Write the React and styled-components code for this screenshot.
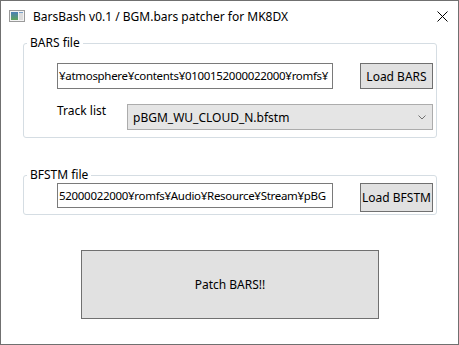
import React from 'react'
import styled, { createGlobalStyle } from 'styled-components'

const GlobalStyle = createGlobalStyle`
  html, body {
    margin: 0;
    padding: 0;
    background: #ffffff;
  }
  body {
    font-family: "Noto Sans", "Open Sans", sans-serif;
    font-size: 12px;
    color: #000;
  }
`

const Window = styled.div`
  box-sizing: border-box;
  width: 459px;
  height: 345px;
  border: 1px solid #707070;
  background: #ffffff;
  display: flex;
  flex-direction: column;
`

const TitleBar = styled.div`
  height: 30px;
  display: flex;
  align-items: center;
  padding: 0 10px 0 8px;
`

const TitleText = styled.span`
  margin-left: 8px;
  flex: 1;
  font-size: 12px;
`

const Body = styled.div`
  display: flex;
  flex-direction: column;
  padding: 4px 21px 0 22px;
`

const Group = styled.fieldset`
  margin: ${p => p.$top || 0}px 0 0 0;
  padding: ${p => p.$pad};
  border: 1px solid #d5dde3;
  border-radius: 3px;
  min-width: 0;
  display: flex;
  flex-direction: column;
  gap: ${p => p.$gap || 0}px;
`

const Legend = styled.legend`
  padding: 0 3px;
  margin-left: -30px;
  line-height: 16px;
`

const Row = styled.div`
  display: flex;
  align-items: ${p => p.$align || 'center'};
`

const TextBox = styled.div`
  box-sizing: border-box;
  width: 276px;
  height: ${p => p.$h}px;
  border: 1px solid #7a7a7a;
  overflow: hidden;
  white-space: nowrap;
  font-size: 11.5px;
  letter-spacing: -0.3px;
  line-height: ${p => p.$h - 2}px;
  padding-left: 1px;
`

const Button = styled.button`
  box-sizing: border-box;
  font: inherit;
  color: #000;
  background: #e1e1e1;
  border: 1px solid #707070;
  padding: 0;
  width: ${p => p.$w}px;
  height: ${p => p.$h}px;
  margin-left: ${p => p.$ml || 0}px;
`

const Label = styled.span`
  width: 70px;
  align-self: flex-start;
  line-height: 14px;
`

const Combo = styled.div`
  box-sizing: border-box;
  width: 306px;
  height: 26px;
  background: #e5e5e5;
  border: 1px solid #acacac;
  display: flex;
  align-items: center;
  justify-content: space-between;
  padding: 0 6px 0 5px;
`

const PatchButton = styled(Button)`
  margin: 35px 0 0 58px;
`

function AppIcon() {
  return (
    <svg width="16" height="14" viewBox="0 0 16 14">
      <defs>
        <linearGradient id="pane" x1="0" y1="0" x2="0" y2="1">
          <stop offset="0" stopColor="#4c7fb8" />
          <stop offset="1" stopColor="#5fa35a" />
        </linearGradient>
      </defs>
      <rect x="0.5" y="1.5" width="15" height="11" fill="#f4f4f4" stroke="#9a9a9a" />
      <rect x="2" y="3" width="7" height="8" fill="url(#pane)" />
      <rect x="10" y="3" width="4" height="8" fill="#dcdcdc" />
      <rect x="10" y="3" width="4" height="1" fill="#7aa0c8" />
    </svg>
  )
}

function CloseIcon() {
  return (
    <svg width="11" height="11" viewBox="0 0 11 11">
      <path d="M0.5 0.5 L10.5 10.5 M10.5 0.5 L0.5 10.5" stroke="#000" strokeWidth="1" />
    </svg>
  )
}

function Chevron() {
  return (
    <svg width="8" height="5" viewBox="0 0 8 5">
      <path d="M0.5 0.5 L4 4 L7.5 0.5" stroke="#707070" fill="none" strokeWidth="1" />
    </svg>
  )
}

export default function App() {
  return (
    <>
      <GlobalStyle />
      <Window>
        <TitleBar>
          <AppIcon />
          <TitleText>BarsBash v0.1 / BGM.bars patcher for MK8DX</TitleText>
          <CloseIcon />
        </TitleBar>
        <Body>
          <Group $pad="12px 3px 7px 33px" $gap={15}>
            <Legend>BARS file</Legend>
            <Row>
              <TextBox $h={26}>¥atmosphere¥contents¥0100152000022000¥romfs¥</TextBox>
              <Button $w={73} $h={26} $ml={27}>Load BARS</Button>
            </Row>
            <Row>
              <Label>Track list</Label>
              <Combo>
                <span>pBGM_WU_CLOUD_N.bfstm</span>
                <Chevron />
              </Combo>
            </Row>
          </Group>
          <Group $top={29} $pad="0px 3px 2px 33px">
            <Legend>BFSTM file</Legend>
            <Row $align="flex-start">
              <TextBox $h={25}>52000022000¥romfs¥Audio¥Resource¥Stream¥pBG</TextBox>
              <Button $w={73} $h={29} $ml={27}>Load BFSTM</Button>
            </Row>
          </Group>
          <PatchButton $w={298} $h={69}>Patch BARS!!</PatchButton>
        </Body>
      </Window>
    </>
  )
}
